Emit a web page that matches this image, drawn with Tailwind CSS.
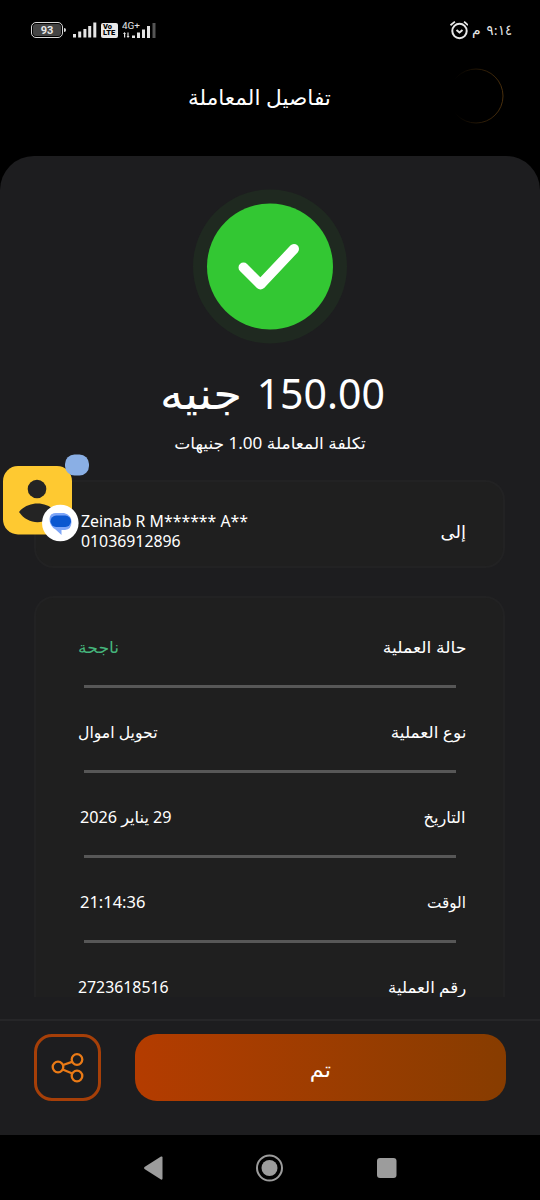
<!DOCTYPE html>
<html lang="ar">
<head>
<meta charset="utf-8">
<meta name="viewport" content="width=device-width, initial-scale=1">
<title>تفاصيل المعاملة</title>
<script src="https://cdn.jsdelivr.net/npm/@tailwindcss/browser@4"></script>
</head>
<body class="bg-black">
<div class="relative flex h-[1200px] w-[540px] flex-col overflow-hidden bg-black font-['Noto_Sans','DejaVu_Sans',sans-serif] text-white">

  <!-- Status bar -->
  <header class="flex h-[60px] shrink-0 items-center justify-between pr-7 pl-[31px]">
    <div class="flex items-center">
      <div class="flex h-4 w-8 items-center justify-center rounded-[5px] border-[1.5px] border-[#d8d8d8] p-px">
        <span class="flex h-full w-full items-center justify-center rounded-[3px] bg-[#444] font-['Roboto',sans-serif] text-[11px] leading-none font-bold text-[#e8e8e8]">93</span>
      </div>
      <span class="ml-px h-1 w-[2px] rounded-r bg-[#d8d8d8]"></span>
      <svg class="ml-1.5" width="26" height="16" viewBox="0 0 26 16" fill="#e4e4e4"><rect x="1" y="12" width="3" height="3.500"/><rect x="6.200" y="9.500" width="3" height="6"/><rect x="11.400" y="7" width="3" height="8.500"/><rect x="16.200" y="4" width="3" height="11.500"/><rect x="21.300" y=".5" width="3" height="15"/></svg>
      <div class="ml-[3px] flex h-[15px] w-[17px] flex-col items-start justify-center rounded-[2px] bg-[#e8e8e8] pl-[2px] font-['Roboto',sans-serif] text-[7.5px] leading-[6.500px] font-black text-black"><span>Vo</span><span>LTE</span></div>
      <div class="ml-1 flex h-[19px] w-9 flex-col">
        <svg width="36" height="19" viewBox="0 0 36 19" fill="#e4e4e4"><text x="0" y="7.500" font-family="Roboto, sans-serif" font-size="9.500" textLength="18" lengthAdjust="spacingAndGlyphs">4G+</text><path d="M2.500 11L4 13H3.200V16.500H2V13H1zM6 17L4.600 15H5.400V11.500H6.600V15H7.600z"/><rect x="10" y="14.500" width="3" height="2.500"/><rect x="15" y="11.500" width="3" height="5.500"/><rect x="20" y="8.500" width="3" height="8.500"/><rect x="25" y="5" width="3" height="12"/><rect x="30.500" y="2" width="3" height="15" fill="#555"/></svg>
      </div>
    </div>
    <div class="flex items-center gap-1">
      <svg width="20" height="20" viewBox="0 0 20 20" fill="none" stroke="#e8e8e8" stroke-width="2"><circle cx="11.500" cy="11" r="7.200"/><path d="M2.500 5.200L6.900 1.600M20 5.200L16.100 1.600" stroke-width="1.800"/><path d="M8.500 10L11.500 12.500L14.500 10"/></svg>
      <span dir="ltr" class="flex items-center gap-1.5 text-[14px] leading-5 text-[#e8e8e8]"><span>م</span><span class="font-['DejaVu_Sans_Condensed','DejaVu_Sans',sans-serif] text-[14.5px] [font-stretch:75%]">٩:١٤</span></span>
    </div>
  </header>

  <!-- Title -->
  <div class="flex h-24 shrink-0 items-start justify-between pr-9 pl-9">
    <span class="w-14"></span>
    <h1 dir="rtl" class="mt-[21px] mr-[22px] scale-x-[1.03] text-[21px] leading-8 whitespace-nowrap">تفاصيل المعاملة</h1>
    <svg class="mt-2" width="56" height="56" viewBox="0 0 56 56" fill="none"><defs><linearGradient id="ring"><stop offset=".1" stop-color="#000"/><stop offset="1" stop-color="#4a2f0c"/></linearGradient></defs><circle cx="28" cy="28" r="27" stroke="url(#ring)"/></svg>
  </div>

  <!-- Sheet -->
  <main class="flex h-[979px] shrink-0 flex-col rounded-t-[34px] bg-[#1d1d1f]">
    <div class="flex h-[841px] shrink-0 flex-col items-center overflow-hidden pt-[33px] pr-px">
      <svg class="shrink-0" width="155" height="155" viewBox="0 0 155 155" fill="none"><circle cx="78" cy="77.500" r="77" fill="#1f2920"/><circle cx="78" cy="77.500" r="63" fill="#33c733"/><path d="M51.500 78.500L68.500 95.500L102 60" stroke="#fff" stroke-width="10" stroke-linecap="round" stroke-linejoin="round"/></svg>
      <p dir="rtl" class="mt-[21px] ml-[6px] flex h-14 items-baseline gap-[14px] leading-[56px] whitespace-nowrap"><span class="origin-right scale-x-[0.965] text-[42.5px] leading-[54px]">150.00</span><span class="origin-left scale-x-[1.06] text-[44px] leading-[54px]">جنيه</span></p>
      <p dir="rtl" class="mt-[11px] scale-x-[1.065] text-[16px] leading-6 whitespace-nowrap">تكلفة المعاملة 1.00 جنيهات</p>

      <section class="mt-[25px] flex h-[88px] w-[471px] shrink-0 items-center justify-between rounded-[20px] border-2 border-[#222223] bg-[#1f1f1f] pr-[37px] pl-[45px]">
        <div class="mt-[14px] origin-left scale-x-[0.96] text-[16.5px] leading-5 whitespace-nowrap"><p>Zeinab R M****** A**</p><p>01036912896</p></div>
        <span dir="rtl" class="mt-4 origin-right scale-x-[1.06] text-[17px] leading-6">إلى</span>
      </section>

      <section dir="rtl" class="mt-7 flex h-[460px] w-[471px] shrink-0 flex-col rounded-t-[20px] border-2 border-[#222223] bg-[#1f1f1f] pt-[37px] pr-[37px] pl-[42px] text-[16px] leading-6 whitespace-nowrap">
        <div class="flex h-[85px] shrink-0 flex-col justify-between pb-[32px]"><div class="flex justify-between"><span class="origin-right scale-x-[1.08]">حالة العملية</span><span class="origin-left scale-x-[1.08] text-[#45b67c]">ناجحة</span></div><div class="mr-[10.5px] ml-[6px] h-[3px] shrink-0 bg-[#575757]"></div></div>
        <div class="flex h-[85px] shrink-0 flex-col justify-between pb-[32px]"><div class="flex justify-between"><span class="origin-right scale-x-[1.06]">نوع العملية</span><span class="origin-left scale-x-[0.98]">تحويل اموال</span></div><div class="mr-[10.5px] ml-[6px] h-[3px] shrink-0 bg-[#575757]"></div></div>
        <div class="flex h-[85px] shrink-0 flex-col justify-between pb-[32px]"><div class="flex justify-between"><span class="origin-right scale-x-[1.01]">التاريخ</span><span class="ml-[2px] origin-left scale-x-[1.01]">29 يناير 2026</span></div><div class="mr-[10.5px] ml-[6px] h-[3px] shrink-0 bg-[#575757]"></div></div>
        <div class="flex h-[85px] shrink-0 flex-col justify-between pb-[32px]"><div class="flex justify-between"><span class="origin-right scale-x-[0.95]">الوقت</span><span class="ml-[2px] origin-left scale-x-[1.03]">21:14:36</span></div><div class="mr-[10.5px] ml-[6px] h-[3px] shrink-0 bg-[#575757]"></div></div>
        <div class="flex justify-between"><span class="origin-right scale-x-[1.04]">رقم العملية</span><span class="origin-left scale-x-[0.96] text-[16.5px]">2723618516</span></div>
      </section>
    </div>

    <footer class="mt-[22px] flex h-[116px] items-start gap-[34px] border-t-2 border-[#262628] px-[34px] pt-[13px]">
      <button class="flex h-[67px] w-[67px] shrink-0 items-center justify-center rounded-[18px] border-3 border-[#a63f08]">
        <svg width="33" height="32" viewBox="0 0 33 32" fill="none" stroke="#ea7a16" stroke-width="2.300"><circle cx="7" cy="15" r="5.300"/><circle cx="26" cy="7.500" r="5.300"/><circle cx="26" cy="24" r="5.300"/><path d="M12 13L21 9.800M11.700 17.500L21.300 21.500"/></svg>
      </button>
      <button dir="rtl" class="flex h-[67px] w-[371px] items-center justify-center rounded-[22px] bg-linear-to-r from-[#b43c00] to-[#873c00] pt-1 text-[20px]"><span class="scale-x-[1.12]">تم</span></button>
    </footer>
  </main>

  <!-- Android navigation -->
  <nav class="flex h-[65px] shrink-0 items-center justify-center">
    <svg width="270" height="30" viewBox="0 0 270 30" fill="#9c9c9c"><path d="M9.500 14Q8.500 15 9.500 16L26 26.500Q27.500 27 27.500 25.500V4.500Q27.500 3 26 3.500z"/><circle cx="134.500" cy="15" r="12.500" fill="none" stroke="#9c9c9c" stroke-width="2"/><circle cx="134.500" cy="15" r="8"/><rect x="242" y="5" width="19.500" height="20" rx="3"/></svg>
  </nav>

  <!-- Floating contact bubble -->
  <div class="absolute top-[454px] left-0">
    <svg width="92" height="92" viewBox="0 0 92 92"><rect x="3" y="12" width="69" height="68.500" rx="15" fill="#fec931"/><circle cx="37" cy="35" r="9.300" fill="#242424"/><path d="M19 58C28 46.500 47 46.500 56 58C47 71.500 28 71.500 19 58z" fill="#242424"/><circle cx="60.300" cy="69" r="18.300" fill="#fff"/><rect x="50" y="59" width="17" height="14" rx="6" fill="#a8c3fb"/><path d="M56 59H64Q71.500 61 71.500 68Q71.500 75.500 65 76H61.500V81L55.500 75.500Q49.500 72 49.500 65Q49.500 59 56 59z" fill="#7da5f8"/><rect x="50.500" y="61.500" width="20.500" height="11.500" rx="5.700" fill="#0b57d0"/><rect x="65" y=".5" width="24" height="21" rx="9.500" fill="#8aafe5"/></svg>
  </div>
</div>
</body>
</html>
